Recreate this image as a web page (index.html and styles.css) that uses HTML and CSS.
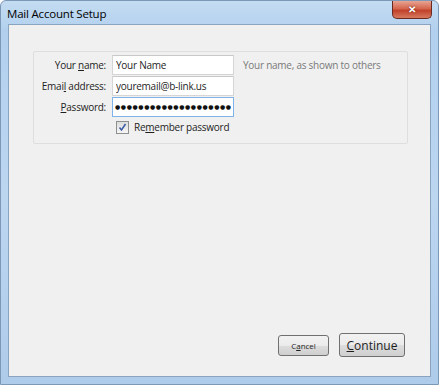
FILE: index.html
```html
<!DOCTYPE html>
<html lang="en">
<head>
    <meta charset="UTF-8">
    <meta name="viewport" content="width=device-width, initial-scale=1.0">
    <title>Mail Account Setup</title>
    <link rel="stylesheet" href="styles.css">
</head>
<body>
    <div class="window">
        <div class="titlebar">
            <span class="title">Mail Account Setup</span>
            <button class="close">&#x2715;</button>
        </div>
        <div class="client">
            <div class="group">
                <div class="row">
                    <label class="lbl">Your <u>n</u>ame:</label>
                    <input type="text" class="text" value="Your Name">
                    <span class="hint">Your name, as shown to others</span>
                </div>
                <div class="row">
                    <label class="lbl">Emai<u>l</u> address:</label>
                    <input type="text" class="text" value="youremail@b-link.us">
                </div>
                <div class="row">
                    <label class="lbl"><u>P</u>assword:</label>
                    <input type="text" class="text focus" value="&#x25CF;&#x25CF;&#x25CF;&#x25CF;&#x25CF;&#x25CF;&#x25CF;&#x25CF;&#x25CF;&#x25CF;&#x25CF;&#x25CF;&#x25CF;&#x25CF;&#x25CF;&#x25CF;&#x25CF;&#x25CF;&#x25CF;&#x25CF;">
                </div>
                <div class="row check">
                    <span class="box">
                        <svg width="9" height="9" viewBox="0 0 9 9"><path d="M1.5 4.5 L3.5 7 L7.5 1" fill="none" stroke="#3a5aa8" stroke-width="1.5"/></svg>
                    </span>
                    <span>Re<u>m</u>ember password</span>
                </div>
            </div>
            <div class="buttons">
                <button class="btn small">C<u>a</u>ncel</button>
                <button class="btn big"><u>C</u>ontinue</button>
            </div>
        </div>
    </div>
</body>
</html>
```

FILE: styles.css
```css
html, body {
    margin: 0;
    padding: 0;
}
body {
    width: 439px;
    height: 385px;
    font-family: "Open Sans", "Liberation Sans", sans-serif;
    font-size: 10px;
    letter-spacing: -0.25px;
    color: #1e1e1e;
}
.window {
    width: 439px;
    height: 385px;
    box-sizing: border-box;
    background: linear-gradient(to bottom, #c4dcf2 0, #b2d0ee 30px, #bcd6f0 200px, #aecbea 385px);
    border: 1px solid #7d98b6;
    border-radius: 6px 6px 0 0;
    display: flex;
    flex-direction: column;
    padding: 0 7px 7px 7px;
}
.titlebar {
    height: 23px;
    display: flex;
    align-items: flex-start;
    justify-content: space-between;
}
.title {
    margin-top: 5px;
    margin-left: -1px;
    font-size: 11.5px;
    letter-spacing: -0.2px;
    color: #000;
}
.close {
    width: 40px;
    height: 18px;
    margin-right: -1px;
    border: 1px solid #6b2a20;
    border-top: none;
    border-radius: 0 0 5px 5px;
    background: linear-gradient(to bottom, #e8a493 0, #d4664d 45%, #c2412a 55%, #d6795f 100%);
    color: #fff;
    font-size: 10px;
    font-weight: bold;
    padding: 0;
    text-shadow: 0 0 2px #5a1a10;
}
.client {
    flex: 1;
    background: #f0f0f0;
    border: 1px solid #8aa4c0;
    display: flex;
    flex-direction: column;
    justify-content: space-between;
    padding: 26px 0 19px 24px;
}
.group {
    width: 373px;
    border: 1px solid #dedede;
    border-radius: 2px;
    padding: 2px 0 6px 0;
}
.row {
    display: flex;
    align-items: center;
    height: 21px;
}
.lbl {
    width: 72px;
    white-space: nowrap;
    text-align: right;
    margin-right: 6px;
}
.text {
    width: 122px;
    height: 20px;
    box-sizing: border-box;
    border: 1px solid #d5d5d5;
    border-top-color: #c8c8c8;
    background: #fff;
    font-family: "Open Sans", "Liberation Sans", sans-serif;
    font-size: 10px;
    letter-spacing: -0.25px;
    padding: 0 3px;
    color: #1e1e1e;
    outline: none;
}
.focus {
    border-color: #7eb4ea;
    font-family: "DejaVu Sans", sans-serif;
    font-size: 6px;
    letter-spacing: 0.6px;
    padding: 0 2px;
    color: #111;
}
.hint {
    margin-left: 9px;
    color: #7a7a7a;
}
.check {
    padding-left: 82px;
    height: 20px;
}
.box {
    width: 11px;
    height: 11px;
    border: 1px solid #8e8f8f;
    background: linear-gradient(to bottom, #dcdcdc, #f6f6f6);
    display: flex;
    align-items: center;
    justify-content: center;
    margin-right: 5px;
}
.buttons {
    display: flex;
    justify-content: flex-end;
    align-items: center;
    gap: 10px;
    padding-right: 25px;
}
.btn {
    border: 1px solid #707070;
    border-radius: 3px;
    background: linear-gradient(to bottom, #f2f2f2 0, #ebebeb 50%, #dddddd 51%, #cfcfcf 100%);
    font-family: "Open Sans", "Liberation Sans", sans-serif;
    color: #1e1e1e;
    padding: 0;
}
.small {
    width: 51px;
    height: 21px;
    font-size: 8px;
}
.big {
    width: 66px;
    height: 24px;
    font-size: 12px;
}
```
